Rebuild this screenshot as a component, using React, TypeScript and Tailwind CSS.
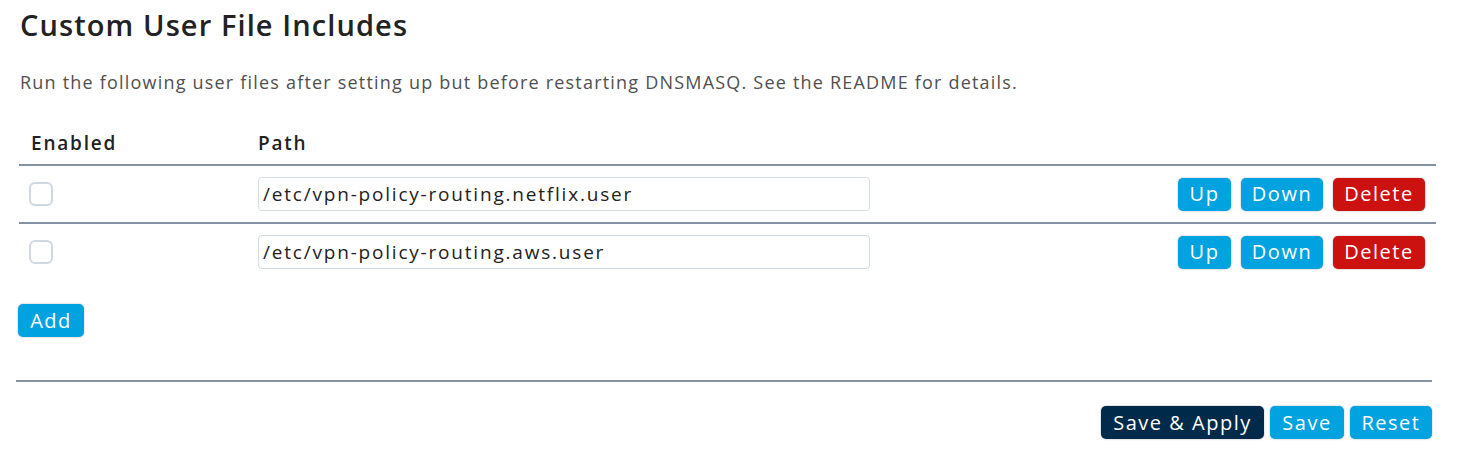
import { useState } from "react";

const font = { fontFamily: '"Open Sans", "Liberation Sans", sans-serif' };

const Btn = ({ label, color, w }: { label: string; color: string; w: string }) => (
  <button
    className={`h-[33px] ${w} ${color} rounded-[5px] text-white text-[20px] tracking-[1.5px] leading-none shadow-[0_0_2px_rgba(0,0,0,0.35)]`}
  >
    {label}
  </button>
);

const rowsInit = [
  "/etc/vpn-policy-routing.netflix.user",
  "/etc/vpn-policy-routing.aws.user",
];

export default function App() {
  const [rows] = useState(rowsInit);

  return (
    <div className="w-[1457px] h-[456px] bg-white text-[#222]" style={font}>
      {/* Title */}
      <h2 className="pl-[20px] pt-[7px] text-[29px] leading-[35px] font-semibold tracking-[1.1px]">
        Custom User File Includes
      </h2>

      {/* Description */}
      <p className="pl-[20px] mt-[29px] text-[18px] leading-[22px] tracking-[1.2px] text-[#505050]">
        Run the following user files after setting up but before restarting DNSMASQ. See the README for details.
      </p>

      {/* Table */}
      <div className="ml-[19px] w-[1417px] mt-[29px]">
        <div className="flex h-[42px] items-center text-[19px] font-semibold tracking-[1.8px]">
          <div className="w-[239px] pl-[12px]">Enabled</div>
          <div>Path</div>
        </div>

        {rows.map((path) => (
          <div key={path} className="flex h-[58px] items-center border-t-2 border-[#8393a3]">
            <div className="w-[239px] pl-[10px]">
              <div className="w-[24px] h-[24px] rounded-[6px] border-2 border-[#cfd7e0]" />
            </div>
            <input
              readOnly
              value={path}
              className="w-[612px] h-[34px] rounded-[4px] border border-[#d6dce3] px-[4px] text-[19px] tracking-[1.8px] text-[#222] outline-none"
            />
            <div className="flex-1 flex justify-end gap-[10px] pr-[11px]">
              <Btn label="Up" color="bg-[#00a3e0]" w="w-[53px]" />
              <Btn label="Down" color="bg-[#00a3e0]" w="w-[82px]" />
              <Btn label="Delete" color="bg-[#cc1111]" w="w-[92px]" />
            </div>
          </div>
        ))}
      </div>

      {/* Add */}
      <div className="ml-[18px] mt-[24px]">
        <Btn label="Add" color="bg-[#00a3e0]" w="w-[66px]" />
      </div>

      {/* Footer */}
      <div className="ml-[16px] w-[1416px] mt-[43px] border-t-2 border-[#8393a3]" />
      <div className="w-[1432px] flex justify-end gap-[6px] mt-[24px]">
        <Btn label="Save & Apply" color="bg-[#002a4a]" w="w-[163px]" />
        <Btn label="Save" color="bg-[#00a3e0]" w="w-[74px]" />
        <Btn label="Reset" color="bg-[#00a3e0]" w="w-[82px]" />
      </div>
    </div>
  );
}
